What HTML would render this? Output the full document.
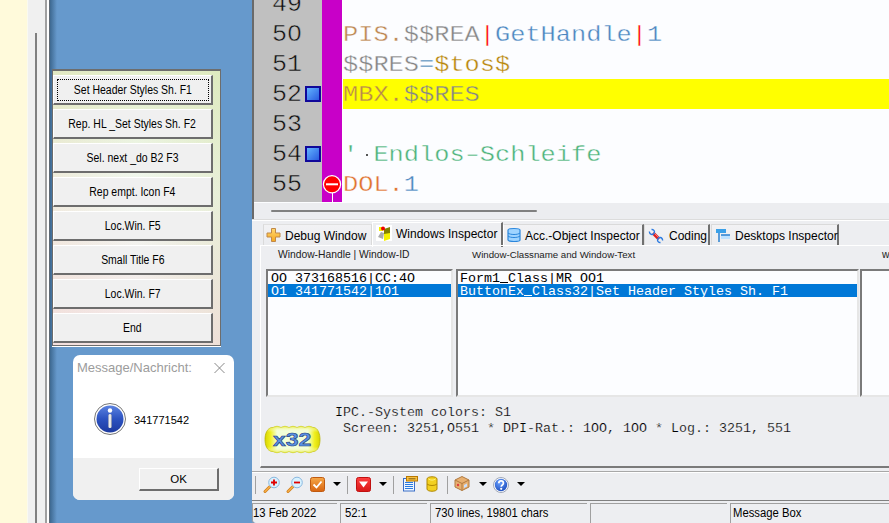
<!DOCTYPE html>
<html><head><meta charset="utf-8">
<style>
*{box-sizing:border-box}
html,body{margin:0;padding:0;width:889px;height:523px;overflow:hidden;background:#6699cc;font-family:"Liberation Sans",sans-serif}
.a{position:absolute}
.mono{font-family:"Liberation Mono",monospace}
svg{position:absolute;overflow:visible}
#bp{box-shadow:0 1px 0 #fff;left:52px;top:69px;width:169px;height:277px;border:1px solid #6d6d6d;border-top-width:2px;
 background:linear-gradient(180deg,rgba(214,230,170,0.55),rgba(255,255,255,0) 45%,rgba(245,205,215,0.45)),linear-gradient(90deg,#f0ece0,#f2f8f2 50%,#e8efd8)}
.btn{position:absolute;left:0px;width:160px;height:30px;background:#f0f0f0;border-top:1px solid #fff;border-left:1px solid #fff;
 border-right:2px solid #6d6d6d;border-bottom:2px solid #6d6d6d;font-size:11.5px;color:#000;text-align:center;line-height:29px}
.btn b{font-weight:normal;display:inline-block;transform:scale(0.91,1.08)}
#mb{left:73px;top:355px;width:161px;height:145px;background:#fff;border-radius:7px;overflow:hidden}
#ed{left:252px;top:0;width:637px;height:219px;background:#ecedf0;border-left:2px solid #6a6a6a}
#gut{left:0;top:0;width:68px;height:202px;background:#c0c0c0;overflow:hidden}
#mag{left:68px;top:0;width:20px;height:202px;background:#c800c8}
#code{left:88px;top:0;width:549px;height:203px;background:#fcfdff;overflow:hidden;border-left:1px solid #fff}
.ln{position:absolute;left:0;width:68px;height:30px;font-size:25px;line-height:30px;color:#111;-webkit-text-stroke:0.5px #c0c0c0;padding-left:18px;transform:scaleY(0.94);transform-origin:0 22px}
.cl{position:absolute;left:0;height:30px;font-size:25.33px;line-height:30px;white-space:pre;-webkit-text-stroke:0.4px #fcfdff;transform:scaleY(0.87);transform-origin:0 22px}
#lo{left:252px;top:219px;width:637px;height:304px;border-bottom-left-radius:5px;background:#edeef1;border-top:1px solid #dcdcdc}
.tab{position:absolute;top:4px;height:21px;font-size:12px;line-height:22px;color:#000;border:1px solid #dadada;border-bottom:none;background:linear-gradient(#f2f2f4,#ebecef);white-space:nowrap}
.tab.dk{border-right:2px solid #707070}
.lst{position:absolute;background:#fcfdff;border-top:2px solid #7a7a7a;border-left:2px solid #7a7a7a;border-right:2px solid #e6e6e6;border-bottom:2px solid #e6e6e6;overflow:hidden}
.row{position:absolute;left:0;height:13px;font-size:13.33px;line-height:15px;white-space:pre;padding-left:2px;color:#000}
.row i{display:inline-block;width:8px;height:11px;border-bottom:1px solid currentColor;vertical-align:-1px}
.sel{background:#0078d7;color:#fff}
.sb{position:absolute;top:1px;height:22px;border-top:1px solid #a0a0a0;border-left:1px solid #a0a0a0;font-size:12px;line-height:19px;padding-left:4px;white-space:nowrap;color:#000}
.sb span{display:inline-block;transform:scaleX(0.94);transform-origin:0 0}
.sep{position:absolute;top:256px;width:1px;height:18px;background:#a0a0a0}
.arr{position:absolute;top:262px;width:0;height:0;border-left:4px solid transparent;border-right:4px solid transparent;border-top:4px solid #000}
</style></head><body>
<div class="a" style="left:0;top:0;width:27px;height:523px;background:#fffadb"></div>
<div class="a" style="left:27px;top:0;width:1px;height:523px;background:#fafaf0"></div>
<div class="a" style="left:28px;top:0;width:22px;height:523px;background:#f0f0f0"></div>
<div class="a" style="left:35px;top:33px;width:2px;height:490px;background:#808080"></div>
<div class="a" style="left:45px;top:0;width:2px;height:523px;background:#a0a0a0"></div>
<div class="a" style="left:47px;top:0;width:2px;height:523px;background:#fff"></div>
<div class="a" style="left:49px;top:0;width:1px;height:523px;background:#606a74"></div>
<div class="a" style="left:50px;top:0;width:7px;height:523px;background:linear-gradient(90deg,#3d6890,#6699cc)"></div>

<div class="a" id="bp">
 <div class="btn" style="top:4px"><span style="display:inline-block;border:1px dotted #000;width:152px;line-height:20px;margin-top:3px"><b>Set Header Styles Sh. F1</b></span></div>
 <div class="btn" style="top:38px"><b>Rep. HL _Set Styles Sh. F2</b></div>
 <div class="btn" style="top:72px"><b>Sel. next _do B2 F3</b></div>
 <div class="btn" style="top:106px"><b>Rep empt. Icon F4</b></div>
 <div class="btn" style="top:140px"><b>Loc.Win. F5</b></div>
 <div class="btn" style="top:174px"><b>Small Title F6</b></div>
 <div class="btn" style="top:208px"><b>Loc.Win. F7</b></div>
 <div class="btn" style="top:242px"><b>End</b></div>
</div>

<div class="a" id="mb">
 <div class="a" style="left:4px;top:5px;font-size:13px;color:#9c9c9c">Message/Nachricht:</div>
 <svg style="left:141px;top:8px" width="11" height="10"><path d="M0.5 0L10.5 10M10.5 0L0.5 10" stroke="#7a7a7a" stroke-width="0.9"/></svg>
 <svg style="left:21px;top:48px" width="32" height="32" viewBox="0 0 32 32">
  <defs><linearGradient id="ib" x1="0" y1="0" x2="0" y2="1"><stop offset="0" stop-color="#5b82e0"/><stop offset="0.5" stop-color="#2c52c0"/><stop offset="1" stop-color="#1d3aa0"/></linearGradient>
  <linearGradient id="is" x1="0" y1="0" x2="1" y2="0"><stop offset="0" stop-color="#bbb"/><stop offset="0.5" stop-color="#fff"/><stop offset="1" stop-color="#aaa"/></linearGradient></defs>
  <circle cx="16" cy="16" r="15.5" fill="#fff" stroke="#777" stroke-width="1"/>
  <circle cx="16" cy="16" r="13.5" fill="url(#ib)"/>
  <circle cx="16" cy="7.5" r="2.2" fill="#fff"/>
  <rect x="14.3" y="11" width="3.4" height="14" rx="1.5" fill="url(#is)"/>
 </svg>
 <div class="a" style="left:61px;top:59px;font-size:11px;color:#000">341771542</div>
 <div class="a" style="left:0;top:103px;width:161px;height:42px;background:#f0f0f0"></div>
 <div class="a" style="left:66px;top:113px;width:80px;height:23px;background:#f0f0f0;border-top:1px solid #fff;border-left:1px solid #fff;border-right:2px solid #6d6d6d;border-bottom:2px solid #6d6d6d;font-size:11.5px;text-align:center;line-height:20px">OK</div>
</div>

<div class="a" id="ed">
 <div class="a" id="gut">
  <div class="ln mono" style="top:-10px">49</div>
  <div class="ln mono" style="top:20px">50</div>
  <div class="ln mono" style="top:50px">51</div>
  <div class="ln mono" style="top:80px">52</div>
  <div class="ln mono" style="top:110px">53</div>
  <div class="ln mono" style="top:140px">54</div>
  <div class="ln mono" style="top:170px">55</div>
 </div>
 <div class="a" id="mag"></div>
 <div class="a" style="left:38px;top:30px;width:5px;height:5px;background:#c0c0c0"></div>
 <div class="a" style="left:0;top:202px;width:88px;height:1px;background:#fcfdff"></div>
 <div class="a" id="code">
  <div class="a" style="left:0;top:79px;width:549px;height:30px;background:#ffff00"></div>
  <div class="cl mono" style="top:20px"><span style="color:#bd8650">PIS.</span><span style="color:#858585">$$REA</span><span style="color:#ff0000">|</span><span style="color:#4a86bf">GetHandle</span><span style="color:#ff0000">|</span><span style="color:#4a86bf">1</span></div>
  <div class="cl mono" style="top:50px"><span style="color:#858585">$$RES</span><span style="color:#4682b4">=</span><span style="color:#b8860b">$tos$</span></div>
  <div class="cl mono" style="top:80px;-webkit-text-stroke-color:#ffff00"><span style="color:#b8874b">MBX.</span><span style="color:#858585">$$RES</span></div>
  <div class="cl mono" style="top:140px"><span style="color:#4cb37a">'</span><span style="color:#4cb37a"> </span><span style="color:#4cb37a">Endlos<span style="display:inline-block;transform:scaleX(1.45)">-</span>Schleife</span></div>
  <div class="cl mono" style="top:170px"><span style="color:#e0702c">DOL.</span><span style="color:#4a86bf">1</span></div>
 </div>
 <div class="a" style="left:112px;top:154px;width:2px;height:2px;background:#555"></div>
 <div class="a" style="left:51px;top:86px;width:16px;height:16px;background:#10089a;padding:2px"><div style="width:12px;height:12px;background:linear-gradient(135deg,#62b4ff,#2a5ce0)"></div></div>
 <div class="a" style="left:51px;top:146px;width:16px;height:16px;background:#10089a;padding:2px"><div style="width:12px;height:12px;background:linear-gradient(135deg,#62b4ff,#2a5ce0)"></div></div>
 <div class="a" style="left:78px;top:193px;width:1px;height:9px;background:#fff"></div>
 <svg style="left:68px;top:174px" width="20" height="20" viewBox="0 0 20 20"><circle cx="10" cy="10.3" r="8.6" fill="#ff0000" stroke="#fff" stroke-width="1.2"/><rect x="4" y="9.3" width="12" height="2" fill="#fff"/></svg>
 <div class="a" style="left:17px;top:210px;width:266px;height:2px;background:#808080;border-radius:1px"></div>
</div>

<div class="a" id="lo">
 <div class="a" style="left:0;top:0;width:637px;height:1px;background:#fff"></div>
 <div class="tab" style="left:11px;width:109px;border-top-color:#e0e0e0"><svg style="left:2px;top:2px" width="16" height="16" viewBox="0 0 16 16"><defs><linearGradient id="pg" x1="0" y1="0" x2="0" y2="1"><stop offset="0" stop-color="#ffd870"/><stop offset="1" stop-color="#f6a820"/></linearGradient></defs><path d="M5.5 1.5h4v4.5h4.5v4h-4.5v4.5h-4v-4.5h-4.5v-4h4.5z" fill="url(#pg)" stroke="#c08848" stroke-width="1"/></svg><span style="position:absolute;left:21px;top:0">Debug Window</span></div>
 <div class="tab" style="left:120px;top:2px;height:25px;width:131px;border:none;border-right:2px solid #707070;border-top:1px solid #fff;border-left:1px solid #fff;background:#edeef1"><svg style="left:3px;top:2px" width="16" height="16" viewBox="0 0 16 16"><rect width="16" height="16" fill="#fff"/><path d="M2 12l3-5 3 1-1 6z" fill="#aaa"/><path d="M8 4l6-2v10l-6 3z" fill="#808000"/><path d="M8 9l6-1v6l-6 2z" fill="#f4f000"/><path d="M3 2h4v4H3z" fill="#f4f000"/><circle cx="7" cy="3.5" r="2" fill="#e00"/></svg><span style="position:absolute;left:23px;top:0px">Windows Inspector</span></div>
 <div class="tab dk" style="left:251px;width:141px;border-left-color:#fff"><svg style="left:3px;top:2px" width="14" height="16" viewBox="0 0 14 16"><path d="M1 3c0-2 12-2 12 0v10c0 2-12 2-12 0z" fill="#9fd4ff" stroke="#2a86dc" stroke-width="1.2"/><path d="M1 6c2 2 10 2 12 0M1 9c2 2 10 2 12 0" stroke="#2a86dc" fill="none"/></svg><span style="position:absolute;left:21px;top:0">Acc.-Object Inspector</span></div>
 <div class="tab dk" style="left:392px;width:66px"><svg style="left:3px;top:3px" width="16" height="16" viewBox="0 0 16 16"><path d="M5 5l6 6" stroke="#e02020" stroke-width="3.2"/><path d="M5.5 4.5l6 6" stroke="#ff9090" stroke-width="0.8"/><path d="M1.5 3.5a2.5 2.5 0 1 0 2-2M14.5 12.5a2.5 2.5 0 1 0-2 2" stroke="#2a7ae0" stroke-width="1.4" fill="none"/></svg><span style="position:absolute;left:24px;top:0">Coding</span></div>
 <div class="tab dk" style="left:459px;width:128px"><svg style="left:3px;top:3px" width="16" height="15" viewBox="0 0 16 15"><path d="M1 1h10v4H1z" fill="#3aa0e8"/><path d="M4 5v9" stroke="#2a80d0" stroke-width="1.5"/><path d="M6 7h9v4H6z" fill="#bfe2ff"/><path d="M6 7h9" stroke="#2a80d0" stroke-width="1.5"/></svg><span style="position:absolute;left:23px;top:0">Desktops Inspector</span></div>
 <div class="a" style="left:8px;top:25px;width:629px;height:223px;border-top:1px solid #fff;border-left:1px solid #fff;border-bottom:2px solid #7a7a7a"></div>
 <div class="a" style="left:26px;top:29px;font-size:10.3px;color:#222">Window-Handle | Window-ID</div>
 <div class="a" style="left:220px;top:29px;font-size:9.7px;color:#222">Window-Classname and Window-Text</div>
 <div class="a" style="left:630px;top:29px;font-size:10.4px;color:#222">w</div>
 <div class="lst mono" style="left:14px;top:49px;width:187px;height:128px">
  <div class="row" style="top:0;padding-left:3px">OO 373168516|CC:4O</div>
  <div class="row sel" style="top:13px;width:183px;padding-left:3px">O1 341771542|1O1</div>
 </div>
 <div class="lst mono" style="left:204px;top:49px;width:403px;height:128px">
  <div class="row" style="top:0">Form1<i>_</i>Class|MR OO1</div>
  <div class="row sel" style="top:13px;width:399px">ButtonEx<i>_</i>Class32|Set Header Styles Sh. F1</div>
 </div>
 <div class="lst" style="left:608px;top:49px;width:40px;height:128px"></div>
 <svg style="left:12px;top:205px" width="57" height="29" viewBox="0 0 57 29">
  <defs><linearGradient id="bgh" x1="0" y1="0" x2="1" y2="0"><stop offset="0" stop-color="#d8d400"/><stop offset="0.1" stop-color="#f0f020"/><stop offset="0.22" stop-color="#f2ffd8"/><stop offset="0.78" stop-color="#f2ffd8"/><stop offset="0.9" stop-color="#f0f020"/><stop offset="1" stop-color="#d8d400"/></linearGradient>
  <linearGradient id="bgv" x1="0" y1="0" x2="0" y2="1"><stop offset="0" stop-color="#e8ec40" stop-opacity="0.9"/><stop offset="0.22" stop-color="#ffffff" stop-opacity="0"/><stop offset="0.78" stop-color="#ffffff" stop-opacity="0"/><stop offset="1" stop-color="#e8ec40" stop-opacity="0.9"/></linearGradient></defs>
  <path id="bshape" d="M9 2.5q4-2.5 8 0q4-2.5 8 0q4-2.5 8 0q4-2.5 8 0q4-2.5 8 0C54 2.5 56 9 56 14.5S54 26.5 49 26.5q-4 2.5-8 0q-4 2.5-8 0q-4 2.5-8 0q-4 2.5-8 0q-4 2.5-8 0C3 26.5 1 20 1 14.5S3 2.5 9 2.5z" fill="url(#bgh)" stroke="#b8b400" stroke-width="0.8"/>
  <path d="M9 2.5q4-2.5 8 0q4-2.5 8 0q4-2.5 8 0q4-2.5 8 0q4-2.5 8 0C54 2.5 56 9 56 14.5S54 26.5 49 26.5q-4 2.5-8 0q-4 2.5-8 0q-4 2.5-8 0q-4 2.5-8 0q-4 2.5-8 0C3 26.5 1 20 1 14.5S3 2.5 9 2.5z" fill="url(#bgv)"/>
 </svg>
 <div class="a" style="left:21px;top:209px;font-size:19px;font-weight:bold;color:#5b93e6;-webkit-text-stroke:0.6px #1e3c78;transform:scaleX(1.21);transform-origin:0 0">x32</div>
 <div class="a mono" style="left:83px;top:185px;font-size:13.33px;line-height:16px;white-space:pre;color:#000;-webkit-text-stroke:0.2px #edeef1">IPC.-System colors: S1
 Screen: 3251,O551 * DPI-Rat.: 1OO, 1OO * Log.: 3251, 551</div>
 <div class="a" style="left:0;top:251px;width:637px;height:1px;background:#a8a8a8"></div>
<div class="a" style="left:0;top:252px;width:637px;height:1px;background:#fff"></div>
 <div class="sep" style="left:3px"></div>
 <svg style="left:11px;top:256px" width="17" height="17" viewBox="0 0 17 17"><path d="M2 15.5l5-5" stroke="#d08020" stroke-width="3" stroke-linecap="round"/><path d="M2 15.5l5-5" stroke="#f8b048" stroke-width="1.2" stroke-linecap="round"/><circle cx="11" cy="6.5" r="5.3" fill="#d8f2ff" stroke="#8ab8e0" stroke-width="1"/><path d="M11 3.5v6M8 6.5h6" stroke="#e00000" stroke-width="1.8"/></svg>
 <svg style="left:34px;top:256px" width="17" height="17" viewBox="0 0 17 17"><path d="M2 15.5l5-5" stroke="#d08020" stroke-width="3" stroke-linecap="round"/><path d="M2 15.5l5-5" stroke="#f8b048" stroke-width="1.2" stroke-linecap="round"/><circle cx="11" cy="6.5" r="5.3" fill="#d8f2ff" stroke="#8ab8e0" stroke-width="1"/><path d="M8 6.5h6" stroke="#e00000" stroke-width="1.8"/></svg>
 <svg style="left:58px;top:257px" width="15" height="15" viewBox="0 0 15 15"><defs><linearGradient id="og" x1="0" y1="0" x2="0" y2="1"><stop offset="0" stop-color="#f6a848"/><stop offset="1" stop-color="#d86410"/></linearGradient></defs><rect x="0.5" y="0.5" width="14" height="14" rx="2" fill="url(#og)" stroke="#c05a10" stroke-width="1"/><path d="M3.5 7.5l3 3 5-6" stroke="#fff" stroke-width="1.8" fill="none"/></svg>
 <div class="arr" style="left:81px"></div>
 <div class="sep" style="left:95px"></div>
 <svg style="left:104px;top:257px" width="15" height="15" viewBox="0 0 15 15"><defs><linearGradient id="rg" x1="0" y1="0" x2="0" y2="1"><stop offset="0" stop-color="#ff4040"/><stop offset="1" stop-color="#d81818"/></linearGradient></defs><rect x="0.5" y="0.5" width="14" height="14" rx="2" fill="url(#rg)" stroke="#c01010" stroke-width="1"/><path d="M3 4.5h9l-4.5 6z" fill="#fff"/></svg>
 <div class="arr" style="left:127px"></div>
 <div class="sep" style="left:141px"></div>
 <svg style="left:150px;top:256px" width="16" height="16" viewBox="0 0 16 16"><rect x="1.5" y="2.5" width="11" height="12.5" fill="#eef6ff" stroke="#3a6ec8" stroke-width="1"/><path d="M3 6.5h8M3 8.5h8M3 10.5h8M3 12.5h8" stroke="#2a7ae0" stroke-width="1"/><rect x="4.5" y="0.5" width="11" height="4.5" fill="#f8c040" stroke="#b87800" stroke-width="1"/><path d="M6.5 2.8h7" stroke="#806010" stroke-width="1"/></svg>
 <svg style="left:174px;top:256px" width="12" height="16" viewBox="0 0 12 16"><path d="M1 3c0-3 10-3 10 0v10c0 3-10 3-10 0z" fill="#f2d020" stroke="#b08800" stroke-width="1"/><path d="M1 8c2 2 8 2 10 0" stroke="#b08800" fill="none"/><path d="M2.5 3c2 1.5 5 1.5 7 0" stroke="#fff27a" fill="none"/></svg>
 <div class="sep" style="left:195px"></div>
 <svg style="left:202px;top:256px" width="16" height="15" viewBox="0 0 16 15"><path d="M8 0.5l7 3.5v7l-7 3.5-7-3.5v-7z" fill="#e8b070" stroke="#b07a40" stroke-width="1"/><path d="M1 4l7 3.5 7-3.5M8 7.5v7" stroke="#b07a40" fill="none"/><path d="M10 9l3-1.5v3l-3 1.5z" fill="#c8e0ff"/><circle cx="4" cy="9" r="1.2" fill="#e04040"/></svg>
 <div class="arr" style="left:227px"></div>
 <svg style="left:241px;top:257px" width="16" height="16" viewBox="0 0 16 16"><defs><radialGradient id="hg" cx="0.4" cy="0.3" r="0.8"><stop offset="0" stop-color="#6aa0ff"/><stop offset="1" stop-color="#1848b8"/></radialGradient></defs><circle cx="8" cy="8" r="7.5" fill="#fff" stroke="#a0a8b8" stroke-width="1"/><circle cx="8" cy="8" r="6.2" fill="url(#hg)"/><path d="M5.8 6.2c0-3 4.6-3 4.6 0c0 1.8-2.2 1.8-2.2 3.6" stroke="#fff" stroke-width="1.7" fill="none"/><circle cx="8.2" cy="11.8" r="1.1" fill="#fff"/></svg>
 <div class="arr" style="left:265px"></div>
 <div class="a" style="left:0;top:280px;width:637px;height:1px;background:#808080"></div>
</div>
<div class="a" style="left:252px;top:502px;width:637px;height:21px;background:#edeef1;border-bottom-left-radius:5px">
 <div class="sb" style="left:0;width:85px;padding-left:0;border-bottom-left-radius:5px"><span>13 Feb 2022</span></div>
 <div class="sb" style="left:88px;width:87px"><span>52:1</span></div>
 <div class="sb" style="left:178px;width:157px"><span>730 lines, 19801 chars</span></div>
 <div class="sb" style="left:338px;width:137px"></div>
 <div class="sb" style="left:478px;width:159px;padding-left:2px"><span>Message Box</span></div>
</div>
</body></html>
